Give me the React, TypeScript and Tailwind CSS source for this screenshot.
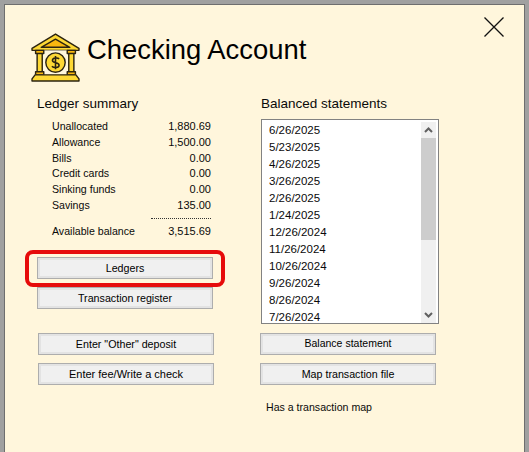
const font = "font-['Liberation_Sans',Arial,sans-serif]";

function WinButton({ label, className = "" }: { label: string; className?: string }) {
  return (
    <button className={`flex h-[22px] w-[176px] items-center justify-center border border-[#adadad] bg-[#f0f0f0] text-black shadow-[inset_0_0_0_2px_#e3e3e3] ${className}`}>
      {label}
    </button>
  );
}

function Bank() {
  return (
    <svg viewBox="0 0 48 48" className="h-[49px] w-[49px] shrink-0">
      <g stroke="#2c2410" strokeWidth="1.4" strokeLinejoin="round">
        <path d="M24 1 L47 15 V17 H1 V15 Z" fill="#fdd835" />
        <path d="M24 6 L38 14 H10 Z" fill="#f9b70f" />
        <rect x="4" y="17" width="40" height="24" fill="#fff7dd" stroke="none" />
        <rect x="6" y="19" width="5" height="21" fill="#fdd835" />
        <rect x="37" y="19" width="5" height="21" fill="#fdd835" />
        <rect x="4.5" y="17" width="8" height="3" fill="#f9b70f" />
        <rect x="35.500" y="17" width="8" height="3" fill="#f9b70f" />
        <rect x="4.5" y="38" width="8" height="3" fill="#f9b70f" />
        <rect x="35.500" y="38" width="8" height="3" fill="#f9b70f" />
        <path d="M4 41 H44 L47 45 V47 H1 V45 Z" fill="#fdd835" />
        <circle cx="24" cy="29" r="9.500" fill="#fdd835" />
        <path d="M27.500 25.500 C26.500 24 21 23.800 21 27 C21 30 27.500 28.500 27.500 31.500 C27.500 34.500 22 34.300 20.500 32.500 M24 22.500 V35.500" fill="none" strokeWidth="1.500" />
      </g>
    </svg>
  );
}

const ledger = [
  ["Unallocated", "1,880.69", "h-[16px]"],
  ["Allowance", "1,500.00", "h-[16px]"],
  ["Bills", "0.00", "h-[15px]"],
  ["Credit cards", "0.00", "h-[16px]"],
  ["Sinking funds", "0.00", "h-[16px]"],
  ["Savings", "135.00", "h-[16px]"],
];

const dates = ["6/26/2025", "5/23/2025", "4/26/2025", "3/26/2025", "2/26/2025", "1/24/2025", "12/26/2024", "11/26/2024", "10/26/2024", "9/26/2024", "8/26/2024", "7/26/2024"];

export default function App() {
  return (
    <div className={`h-[452px] w-[529px] overflow-hidden bg-[#a0a0a0] pl-[4px] pr-[4px] pt-[4px] ${font}`}>
      <div className="relative h-[448px] w-[521px] border-l border-t border-r border-[#6e6e6e] bg-[#fff6dc] text-[#0a0a0a]">
        <svg viewBox="0 0 20 20" className="absolute left-[479px] top-[12px] h-[20px] w-[20px]">
          <path d="M0.500 0.500 L19.500 19.500 M19.500 0.500 L0.500 19.500" stroke="#111" strokeWidth="1.300" fill="none" />
        </svg>
        <div className="flex items-center pl-[26px] pt-[28px]">
          <Bank />
          <div className="ml-[7px] -mt-[16px] text-[27.4px] leading-[32px] text-black">Checking Account</div>
        </div>
        <div className="flex pt-[13px]">
          <div className="ml-[32px] w-[224px]">
            <div className="h-[17px] text-[13.500px] leading-[17px]">Ledger summary</div>
            <div className="ml-[15px] mt-[6px] w-[159px] text-[10.6px] leading-[16px]">
              {ledger.map(([name, value, h]) => (
                <div key={name} className={`flex justify-between ${h}`}>
                  <span>{name}</span>
                  <span className="text-[11px]">{value}</span>
                </div>
              ))}
              <div className="mt-[5px] ml-[99px] h-0 w-[60px] border-t border-dotted border-[#333]"></div>
              <div className="mt-[4px] flex h-[16px] justify-between">
                <span>Available balance</span>
                <span className="text-[11px]">3,515.69</span>
              </div>
            </div>
            <WinButton label="Ledgers" className="mt-[18px] text-[10.7px]" />
            <WinButton label="Transaction register" className="mt-[8px] text-[10.7px]" />
            <WinButton label={'Enter "Other" deposit'} className="ml-px mt-[24px] text-[10.7px]" />
            <WinButton label="Enter fee/Write a check" className="ml-px mt-[8px] text-[11px]" />
          </div>
          <div className="w-[180px]">
            <div className="h-[17px] text-[13.500px] leading-[17px]">Balanced statements</div>
            <div className="mt-[7px] flex h-[205px] w-[178px] overflow-hidden border border-[#828282] bg-white pr-[2px] pt-[2px]">
              <div className="flex-1 pl-[7px] text-[11.5px] leading-[17px]">
                {dates.map((d) => (
                  <div key={d} className="h-[17px]">{d}</div>
                ))}
              </div>
              <div className="flex h-[201px] w-[15px] flex-col items-center bg-[#f0f0f0]">
                <svg viewBox="0 0 15 16" className="h-[16px] w-[15px] shrink-0">
                  <path d="M4 10 L7.500 6.500 L11 10" stroke="#606060" strokeWidth="2" fill="none" />
                </svg>
                <div className="h-[102px] w-full bg-[#cdcdcd]"></div>
                <div className="flex-1"></div>
                <svg viewBox="0 0 15 17" className="h-[17px] w-[15px] shrink-0">
                  <path d="M4 7 L7.500 10.500 L11 7" stroke="#606060" strokeWidth="2" fill="none" />
                </svg>
              </div>
            </div>
            <WinButton label="Balance statement" className="-ml-px mt-[9px] text-[10.5px]" />
            <WinButton label="Map transaction file" className="-ml-px mt-[8px] text-[10.7px]" />
            <div className="ml-[5px] mt-[15px] text-[10.6px] leading-[14px]">Has a transaction map</div>
          </div>
        </div>
        <div className="absolute left-[20px] top-[245px] h-[37px] w-[200px] rounded-[8px] border-[4px] border-[#e60b0b]"></div>
      </div>
    </div>
  );
}
